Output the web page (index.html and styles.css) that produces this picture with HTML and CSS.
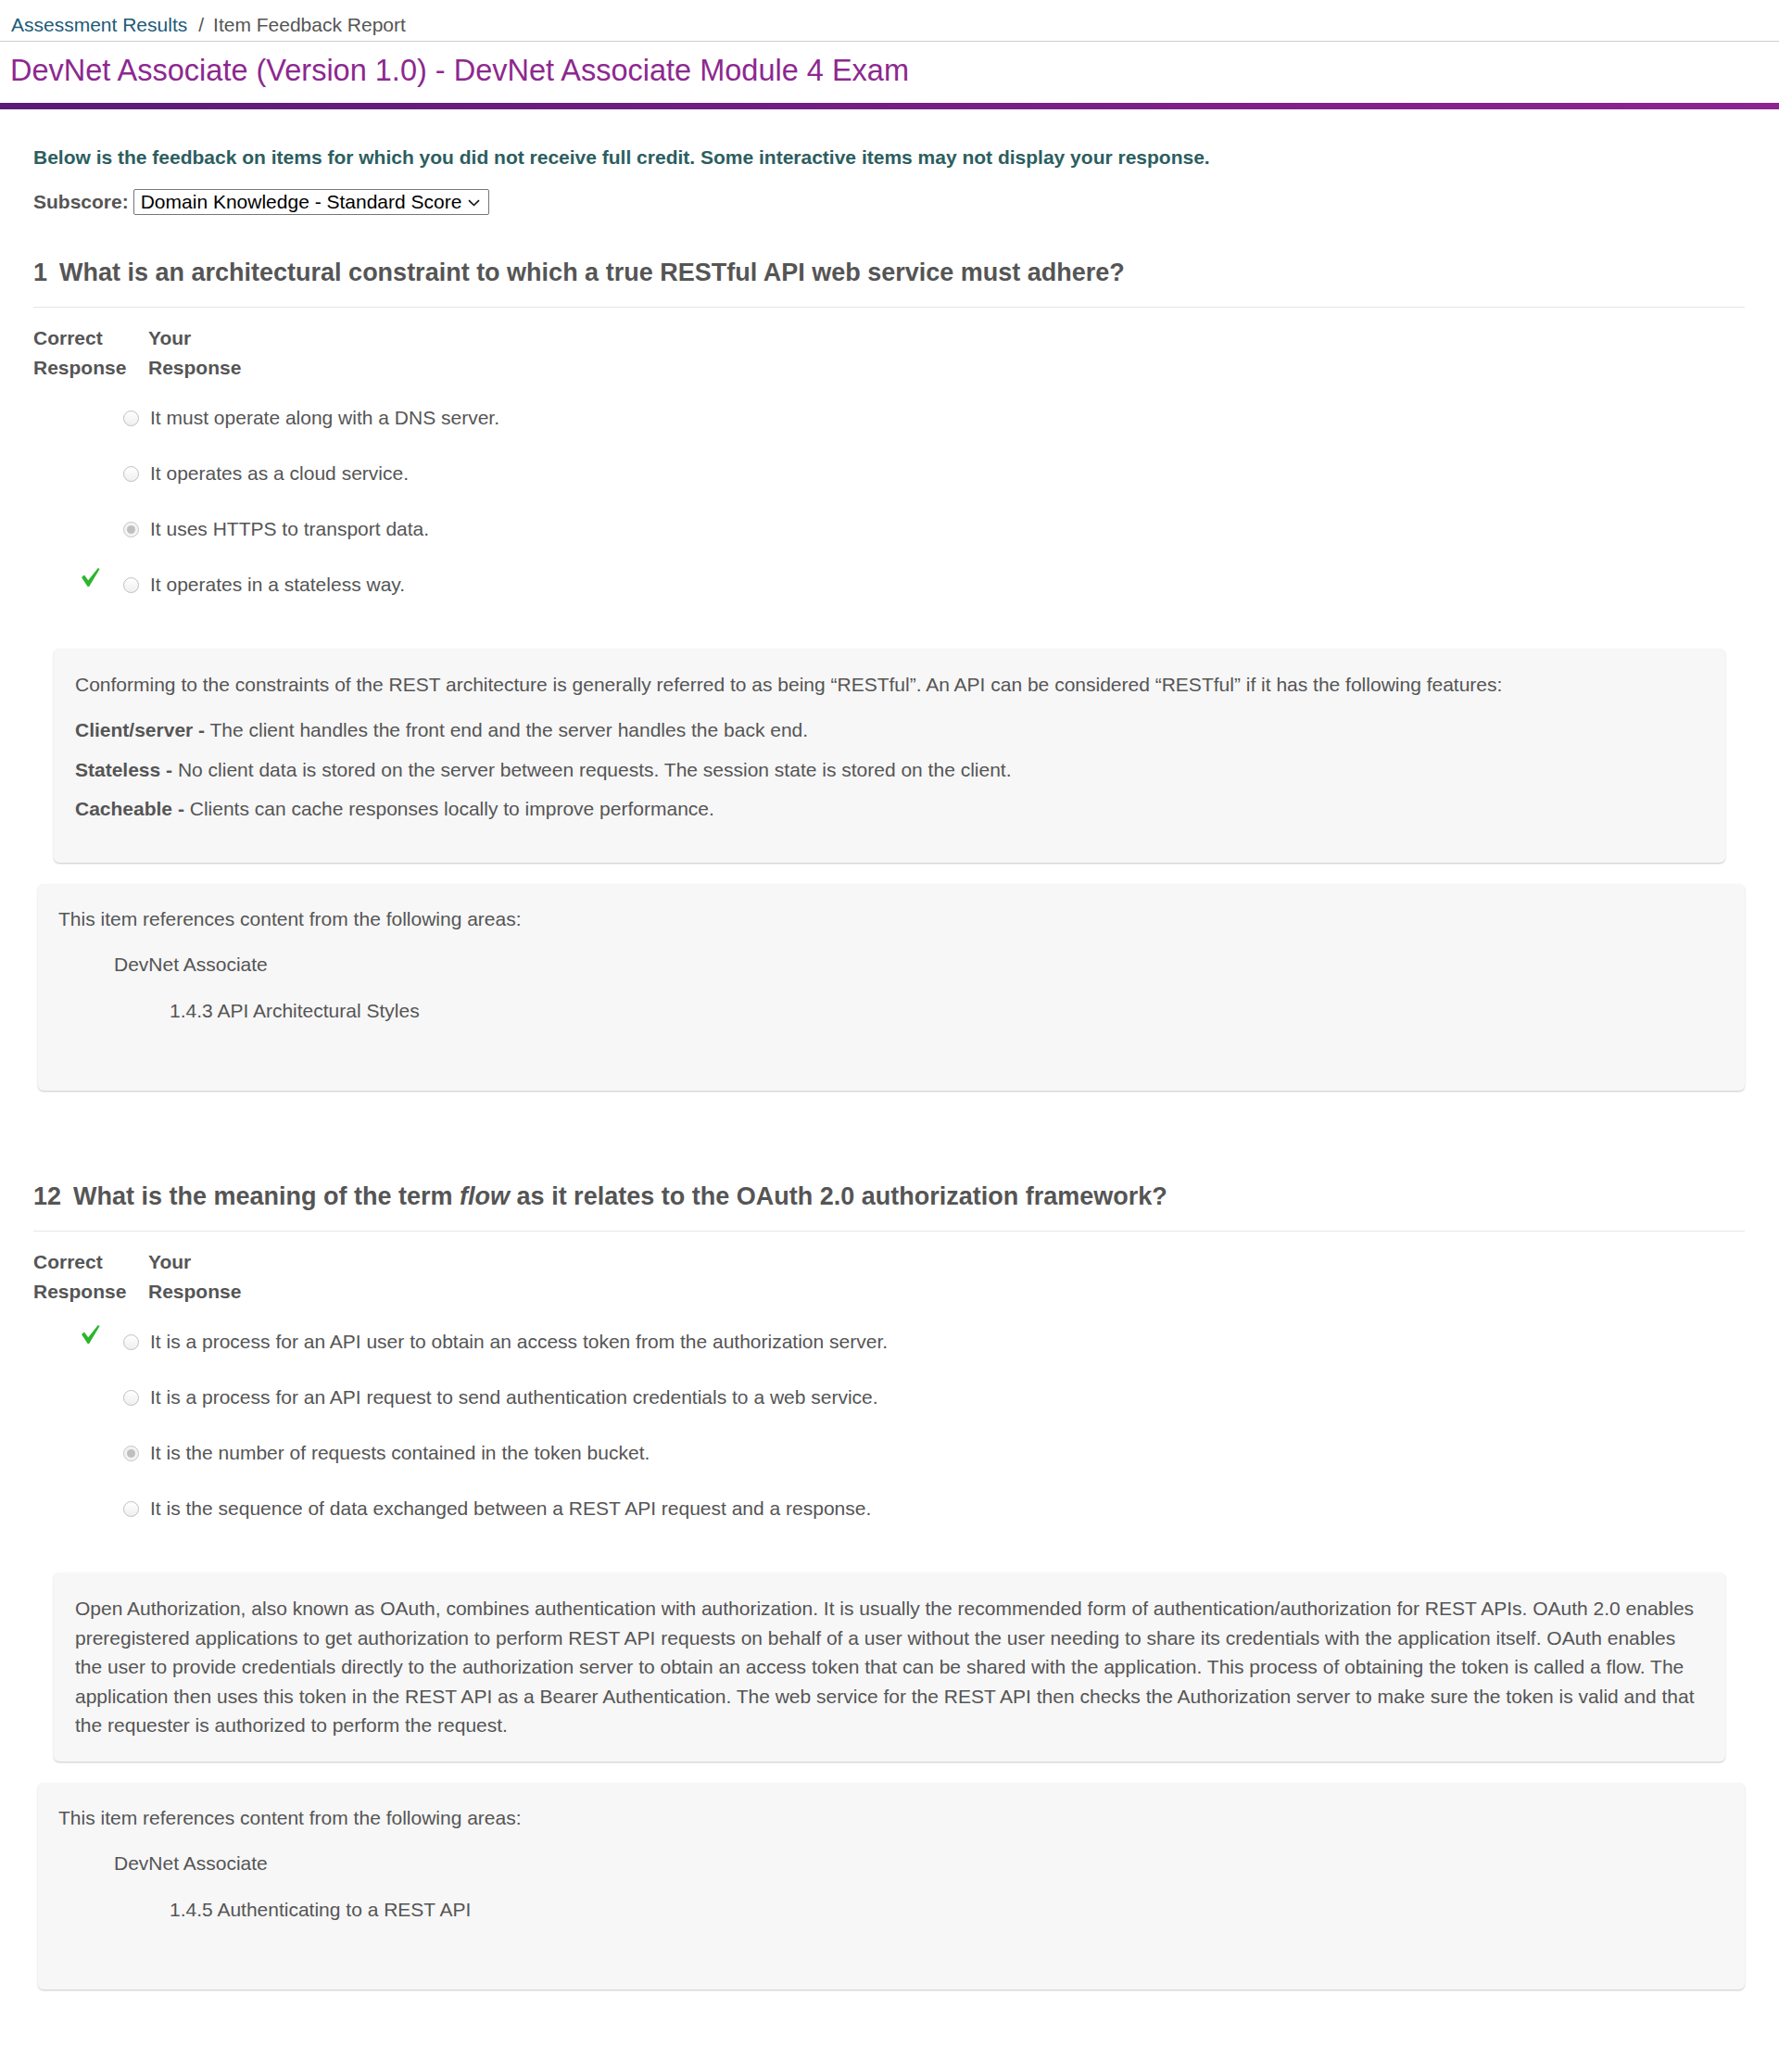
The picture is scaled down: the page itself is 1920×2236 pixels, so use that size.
FILE: index.html
```html
<!DOCTYPE html>
<html lang="en">
<head>
<meta charset="utf-8">
<title>Item Feedback Report</title>
<link rel="stylesheet" href="styles.css">
</head>
<body>
<nav class="crumbs"><a class="crumb-link">Assessment Results</a><span class="sep">/</span><span class="crumb-current">Item Feedback Report</span></nav>
<h1 class="title">DevNet Associate (Version 1.0) - DevNet Associate Module 4 Exam</h1>
<div class="bar"></div>
<main class="content">
  <p class="intro">Below is the feedback on items for which you did not receive full credit. Some interactive items may not display your response.</p>
  <div class="subscore">
    <span class="subscore-label">Subscore:</span>
    <div class="select"><span class="select-text">Domain Knowledge - Standard Score</span><svg class="chev" width="13" height="8" viewBox="0 0 13 8"><path d="M1 1.2 L6.5 6.5 L12 1.2" fill="none" stroke="#111" stroke-width="1.6"/></svg></div>
  </div>

  <section class="question">
    <h2 class="q-title"><span class="q-num">1</span>What is an architectural constraint to which a true RESTful API web service must adhere?</h2>
    <div class="resp-head"><div>Correct<br>Response</div><div>Your<br>Response</div></div>
    <ul class="options">
      <li class="option"><span class="mark"></span><span class="radio"></span><span class="opt-text">It must operate along with a DNS server.</span></li>
      <li class="option"><span class="mark"></span><span class="radio"></span><span class="opt-text">It operates as a cloud service.</span></li>
      <li class="option"><span class="mark"></span><span class="radio checked"></span><span class="opt-text">It uses HTTPS to transport data.</span></li>
      <li class="option"><span class="mark"><svg width="20" height="20" viewBox="0 0 20 20"><path d="M0 10 L3 7.6 L7.2 13.2 L17.8 0 L19.6 1 L8.2 20 L6.6 20 Z" fill="#2db52d"/></svg></span><span class="radio"></span><span class="opt-text">It operates in a stateless way.</span></li>
    </ul>
    <div class="feedback feedback-list">
      <p class="fb-lead">Conforming to the constraints of the REST architecture is generally referred to as being “RESTful”. An API can be considered “RESTful” if it has the following features:</p>
      <p><b>Client/server -</b> The client handles the front end and the server handles the back end.</p>
      <p><b>Stateless -</b> No client data is stored on the server between requests. The session state is stored on the client.</p>
      <p><b>Cacheable -</b> Clients can cache responses locally to improve performance.</p>
    </div>
    <div class="refs">
      <p>This item references content from the following areas:</p>
      <div class="ref-l1">DevNet Associate</div>
      <div class="ref-l2">1.4.3 API Architectural Styles</div>
    </div>
  </section>

  <section class="question">
    <h2 class="q-title"><span class="q-num">12</span>What is the meaning of the term <i>flow</i> as it relates to the OAuth 2.0 authorization framework?</h2>
    <div class="resp-head"><div>Correct<br>Response</div><div>Your<br>Response</div></div>
    <ul class="options">
      <li class="option"><span class="mark"><svg width="20" height="20" viewBox="0 0 20 20"><path d="M0 10 L3 7.6 L7.2 13.2 L17.8 0 L19.6 1 L8.2 20 L6.6 20 Z" fill="#2db52d"/></svg></span><span class="radio"></span><span class="opt-text">It is a process for an API user to obtain an access token from the authorization server.</span></li>
      <li class="option"><span class="mark"></span><span class="radio"></span><span class="opt-text">It is a process for an API request to send authentication credentials to a web service.</span></li>
      <li class="option"><span class="mark"></span><span class="radio checked"></span><span class="opt-text">It is the number of requests contained in the token bucket.</span></li>
      <li class="option"><span class="mark"></span><span class="radio"></span><span class="opt-text">It is the sequence of data exchanged between a REST API request and a response.</span></li>
    </ul>
    <div class="feedback">
      <p class="fb-para">Open Authorization, also known as OAuth, combines authentication with authorization. It is usually the recommended form of authentication/authorization for REST APIs. OAuth 2.0 enables preregistered applications to get authorization to perform REST API requests on behalf of a user without the user needing to share its credentials with the application itself. OAuth enables the user to provide credentials directly to the authorization server to obtain an access token that can be shared with the application. This process of obtaining the token is called a flow. The application then uses this token in the REST API as a Bearer Authentication. The web service for the REST API then checks the Authorization server to make sure the token is valid and that the requester is authorized to perform the request.</p>
    </div>
    <div class="refs">
      <p>This item references content from the following areas:</p>
      <div class="ref-l1">DevNet Associate</div>
      <div class="ref-l2">1.4.5 Authenticating to a REST API</div>
    </div>
  </section>
</main>
</body>
</html>
```

FILE: styles.css
```css
html, body {
  margin: 0;
  padding: 0;
  background: #fff;
}
body {
  font-family: "Liberation Sans", Arial, Helvetica, sans-serif;
  font-size: 21px;
  color: #555;
}
p { margin: 0; }

.crumbs {
  box-sizing: border-box;
  height: 45px;
  padding: 15px 0 0 12px;
  line-height: 24px;
  border-bottom: 1px solid #cfcfcf;
}
.crumb-link {
  color: #1d5b7a;
  text-decoration: none;
}
.sep {
  margin: 0 10px 0 12px;
  color: #555;
}
.crumb-current { color: #555; }

.title {
  margin: 0;
  padding: 11px 0 15px 11px;
  font-size: 32.5px;
  line-height: 40px;
  font-weight: normal;
  color: #8d288f;
}
.bar {
  height: 7px;
  background: linear-gradient(90deg, #5a1a77 0%, #7a1f88 60%, #8c2492 100%);
}

.content {
  padding: 0 37px 89px 36px;
}
.intro {
  margin-top: 37px;
  font-weight: bold;
  line-height: 30px;
  color: #2c5e60;
}
.subscore {
  margin-top: 18px;
  height: 30px;
  display: flex;
  align-items: center;
}
.subscore-label {
  font-weight: bold;
  color: #555;
}
.select {
  margin-left: 5px;
  box-sizing: border-box;
  width: 384px;
  height: 28px;
  border: 1px solid #767676;
  border-radius: 2px;
  padding: 0 9px 0 7px;
  display: flex;
  align-items: center;
  justify-content: space-between;
  color: #000;
  line-height: 26px;
  background: #fff;
}
.chev { display: block; margin-top: 1px; }

.question { margin-top: 42px; }
.question + .question { margin-top: 95px; }

.q-title {
  margin: 0;
  font-size: 27px;
  line-height: 38px;
  font-weight: bold;
  color: #555;
  padding-bottom: 18px;
  border-bottom: 1px solid #e6e6e6;
}
.q-num { margin-right: 13px; }

.resp-head {
  margin-top: 17px;
  display: grid;
  grid-template-columns: 124px auto;
  line-height: 32px;
  font-weight: bold;
  color: #555;
}

.options {
  list-style: none;
  margin: 8px 0 0;
  padding: 0;
}
.option {
  height: 60px;
  display: flex;
  align-items: center;
  padding-left: 52px;
  line-height: 30px;
}
.mark {
  width: 20px;
  height: 20px;
  margin-right: 25px;
  align-self: flex-start;
  margin-top: 12px;
  flex: none;
}
.mark svg { display: block; }
.radio {
  box-sizing: border-box;
  width: 17px;
  height: 17px;
  border-radius: 50%;
  border: 1px solid #c0c0c0;
  background: linear-gradient(#ffffff, #efefef);
  margin-right: 12px;
  flex: none;
  display: flex;
  align-items: center;
  justify-content: center;
}
.radio.checked {
  border-color: #c6c6c6;
  background: #f3f3f3;
}
.radio.checked::after {
  content: "";
  width: 9px;
  height: 9px;
  border-radius: 50%;
  background: #bfbfbf;
}
.opt-text { color: #555; }

.feedback {
  margin: 39px 21px 0 22px;
  padding: 23px 23px 23px 23px;
  background: #f7f7f7;
  border-radius: 6px;
  box-shadow: 0 1px 2px rgba(0, 0, 0, 0.22);
  line-height: 31.5px;
  color: #555;
}
.feedback-list { padding-bottom: 42px; }
.feedback-list p { margin-bottom: 11px; }
.feedback-list p:last-child { margin-bottom: 0; }
.feedback-list .fb-lead { margin-bottom: 17.5px; }
.feedback b { color: #555; }

.refs {
  margin: 23px 0 0 5px;
  padding: 22px 22px 71px 22px;
  background: #f7f7f7;
  border-radius: 6px;
  box-shadow: 0 1px 2px rgba(0, 0, 0, 0.22);
  line-height: 31.5px;
  color: #555;
}
.ref-l1 {
  margin-top: 18px;
  padding-left: 60px;
}
.ref-l2 {
  margin-top: 18px;
  padding-left: 120px;
}
```
